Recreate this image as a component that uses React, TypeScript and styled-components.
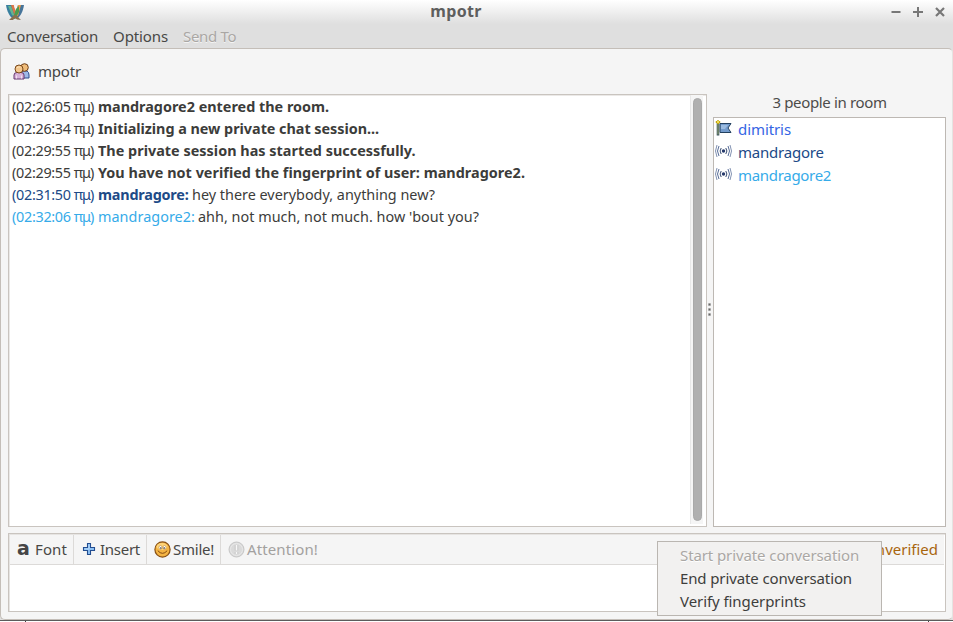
import React from 'react';
import styled, { createGlobalStyle } from 'styled-components';

const GlobalStyle = createGlobalStyle`
  * { box-sizing: border-box; }
  body { margin: 0; background: #fff; font: 15px "Noto Sans", sans-serif; color: #454542; }
  svg { display: block; flex: none; }
`;

const Window = styled.div`
  position: relative;
  width: 953px;
  height: 622px;
  overflow: hidden;
  display: flex;
  flex-direction: column;
  background: #dfdfdf;
`;

const Label = styled.span<{ $ls?: number }>`
  white-space: pre;
  letter-spacing: ${p => p.$ls ?? 0}px;
`;

const TitleBar = styled.header`
  height: 24px;
  flex: none;
  display: grid;
  grid-template-columns: 82px 1fr 82px;
  align-items: center;
  padding: 0 7px 0 5px;
  background: linear-gradient(#ffffff, #dfdfdf);
`;

const Title = styled.h1`
  margin: 0;
  padding: 0 39px 3px 0;
  font-size: 16px;
  line-height: 22px;
  font-weight: 700;
  letter-spacing: 0.3px;
  text-align: center;
  color: #5e5e5e;
`;

const WindowButtons = styled.div`
  display: flex;
  justify-content: flex-end;
  gap: 10px;
  padding-bottom: 2px;
`;

const MenuBar = styled.nav`
  height: 24px;
  flex: none;
  display: flex;
  align-items: flex-start;
  gap: 15px;
  padding-left: 7px;
`;

const MenuEntry = styled.div<{ $disabled?: boolean }>`
  line-height: 24px;
  color: ${p => (p.$disabled ? '#aaa7a4' : '#484846')};
  text-shadow: ${p => (p.$disabled ? '0 1px 0 #f4f4f4' : 'none')};
`;

const Content = styled.main`
  height: 572px;
  flex: none;
  display: flex;
  flex-direction: column;
  padding: 0 6px 0 7px;
  border: 1px solid #c4beb8;
  border-right-color: #e5e3e1;
  border-radius: 5px;
  background: #f5f5f5;
`;

const RoomHeader = styled.div`
  height: 45px;
  flex: none;
  display: flex;
  align-items: center;
  gap: 8px;
  padding: 0 0 1px 5px;
`;

const Panes = styled.div`
  height: 433px;
  flex: none;
  display: flex;
`;

const LogFrame = styled.section`
  width: 699px;
  display: flex;
  justify-content: space-between;
  padding: 0 3px 2px 0;
  border: 1px solid #c9c4bf;
  box-shadow: inset 1px 1px 0 #ebe9e7;
  background: #fff;
`;

const LogLines = styled.div`
  padding: 1px 0 0 3px;
  font-size: 14.4px;
`;

const LogLine = styled.div<{ $color?: string }>`
  height: 22px;
  display: flex;
  line-height: 22px;
  color: ${p => p.$color ?? '#3c3c3a'};
`;

const StampBox = styled.span`
  width: 86px;
  flex: none;
  display: flex;
  gap: 3px;
`;

const Message = styled(Label)`
  color: #3c3c3a;
`;

const Strong = styled(Message)`
  font-weight: 700;
`;

const Author = styled(Label)<{ $bold?: boolean; $gap: number }>`
  font-weight: ${p => (p.$bold ? 700 : 400)};
  width: ${p => p.$gap}px;
`;

const Trough = styled.div`
  width: 13px;
  padding: 3px 2px 3px 2px;
  border-left: 1px solid #e8e8e8;
  background: #f5f5f5;
`;

const Thumb = styled.div`
  width: 9px;
  height: 100%;
  border-radius: 5px;
  background: #b0b0b0;
  border: 1px solid #a9a9a9;
`;

const Grip = styled.div`
  width: 6px;
  display: flex;
  flex-direction: column;
  justify-content: center;
  align-items: flex-start;
  gap: 2px;
  padding: 0 0 3px 1px;
`;

const GripDot = styled.i`
  width: 3px;
  height: 3px;
  border: 1px solid #a2a2a2;
  border-radius: 1px;
  background: #666;
`;

const People = styled.aside`
  width: 233px;
  display: flex;
  flex-direction: column;
`;

const PeopleTitle = styled.div`
  height: 23px;
  flex: none;
  line-height: 16px;
  text-align: center;
  color: #4c4c4a;
`;

const PeopleList = styled.div`
  flex: 1;
  border: 1px solid #bdb8b3;
  background: #fff;
  padding-left: 2px;
`;

const Person = styled.div<{ $color: string }>`
  height: 23px;
  display: flex;
  align-items: flex-start;
  gap: 6px;
  line-height: 23px;
  color: ${p => p.$color};

  svg { margin: 2px 0 0 -1px; }
`;

const Composer = styled.section`
  height: 79px;
  flex: none;
  margin-top: 6px;
  border: 1px solid #c9c4bf;
  box-shadow: inset 1px 1px 0 #e6e4e2;
  background: #fff;
  padding: 1px;
`;

const Toolbar = styled.div`
  height: 30px;
  display: flex;
  align-items: stretch;
  background: #f5f5f5;
  border-bottom: 1px solid #dcdad8;
`;

const Tool = styled.div<{ $w: number; $pad: number; $gap: number; $disabled?: boolean }>`
  width: ${p => p.$w}px;
  display: flex;
  align-items: center;
  gap: ${p => p.$gap}px;
  padding: 0 0 2px ${p => p.$pad}px;
  border-right: 1px solid ${p => (p.$disabled ? 'transparent' : '#dcdad8')};
  color: ${p => (p.$disabled ? '#a3a19f' : '#484846')};

  svg { margin-top: 1px; }
`;

const FontMark = styled.span`
  width: 13px;
  font: 700 19px/26px "DejaVu Sans", sans-serif;
  padding-bottom: 2px;
  color: #454545;
`;

const Status = styled.div`
  margin-left: auto;
  padding-right: 6px;
  line-height: 28px;
  color: #a8650d;
`;

const Popup = styled.div`
  position: absolute;
  left: 657px;
  top: 541px;
  width: 225px;
  height: 75px;
  padding: 3px 0 0 22px;
  border: 1px solid #bab6b1;
  background: #f2f1f0;
`;

const PopupItem = styled.div<{ $disabled?: boolean }>`
  height: 23px;
  line-height: 21px;
  color: ${p => (p.$disabled ? '#aaa7a4' : '#3e3e3c')};
  text-shadow: ${p => (p.$disabled ? '0 1px 0 #fff' : 'none')};
`;

const BottomEdge = styled.div`
  height: 2px;
  flex: none;
  display: flex;
  justify-content: space-between;
  padding: 0 24px 0 25px;
  border-top: 1px solid #5c5c5c;
  background: #fff;
`;

const EdgeTick = styled.i`
  width: 1px;
  height: 1px;
  background: #444;
`;

const AppLogo = () => (
  <svg width="20" height="18" viewBox="0 0 20 18">
    <path d="M1 1H8L12 14 8 14.500C4 12 2 7 1 1Z" fill="#397f9f" />
    <path d="M3 2H6L10 13 7 11Z" fill="#65b590" />
    <path d="M6 1H9L12 12 10 13Z" fill="#dc7648" />
    <path d="M19 1H13L9 13 12 14.500C16 12 18 7 19 1Z" fill="#47759a" />
    <path d="M13 1H16L13 12 10 11Z" fill="#ef9b49" />
    <path d="M11 5 14 2 14 8 10 15 8 14Z" fill="#4d9b4d" />
    <path d="M4 16 9 11H11L16 16 12 15.500 10 14 8 16Z" fill="#8b704f" />
    <path d="M8.500 0H12L10.300 6Z" fill="#f4f4f4" />
  </svg>
);

const GroupIcon = () => (
  <svg width="17" height="17" viewBox="0 0 17 17">
    <path d="M8 15V10Q8 8 11 8H14Q16 9 16 12V15Z" fill="#9eb9e8" stroke="#304d8f" />
    <circle cx="11.500" cy="4.500" r="3.800" fill="#efbc79" stroke="#704018" />
    <path d="M1 16V12Q1 9.500 4 9.500H8Q11 9.500 11 12V16Z" fill="#d8b2d9" stroke="#65366f" />
    <path d="M3.500 12.500v3M8.500 12.500v3" stroke="#f1e3f1" />
    <circle cx="6" cy="6" r="4" fill="#f4c78d" stroke="#784719" />
    <path d="M3.800 4.800Q5 3.500 7 4" stroke="#ffe5bd" fill="none" />
  </svg>
);

const FlagIcon = () => (
  <svg width="17" height="17" viewBox="0 0 17 17">
    <path d="M5 3.500H16L13 8 16 12.500H5Z" fill="#739bcc" stroke="#23405f" />
    <path d="M6 5H13L10 9H6Z" fill="#9bbbe0" />
    <path d="M3 3V15.500" stroke="#37505c" strokeWidth="2.600" />
    <path d="M3 4V14.500" stroke="#9ead76" />
    <path d="M.8 2H5.200M3 .2V4" stroke="#c3a511" strokeWidth="2" />
    <circle cx="3" cy="2" r="1" fill="#fff06b" />
  </svg>
);

const SignalIcon = () => (
  <svg width="17" height="17" viewBox="0 0 17 17" fill="none" stroke="#566c98">
    <circle cx="8.500" cy="8" r="1.700" fill="#263a6c" stroke="none" />
    <path d="M6.200 5Q4 8 6.200 11M10.800 5Q13 8 10.800 11" stroke="#34496f" />
    <path d="M4 3Q1 8 4 13M13 3Q16 8 13 13" />
    <path d="M2 2Q-1 8 2 14M15 2Q18 8 15 14" stroke="#8292b2" />
  </svg>
);

const InsertIcon = () => (
  <svg width="14" height="14" viewBox="0 0 14 14">
    <path d="M5.500 1.500H8.500V5.500H12.500V8.500H8.500V12.500H5.500V8.500H1.500V5.500H5.500Z" fill="#8dc1f4" stroke="#234e91" strokeWidth="1.100" />
    <path d="M7 2.500V7H2.500" stroke="#b9dcfb" fill="none" />
  </svg>
);

const SmileIcon = () => (
  <svg width="17" height="17" viewBox="0 0 17 17">
    <circle cx="8.500" cy="8.500" r="7.600" fill="#f4b443" stroke="#885013" strokeWidth="1.200" />
    <ellipse cx="8" cy="5.500" rx="5.500" ry="3.500" fill="#ffd477" />
    <ellipse cx="6.500" cy="6.500" rx="1.600" ry="2" fill="#fff" stroke="#b8853a" strokeWidth=".6" />
    <ellipse cx="10.500" cy="6.500" rx="1.600" ry="2" fill="#fff" stroke="#b8853a" strokeWidth=".6" />
    <circle cx="6.800" cy="7" r=".8" fill="#333" />
    <circle cx="10.200" cy="7" r=".8" fill="#333" />
    <path d="M3.800 9.700Q8.500 15 13.200 9.700" stroke="#874c12" fill="none" />
  </svg>
);

const AttentionIcon = () => (
  <svg width="17" height="17" viewBox="0 0 17 17">
    <circle cx="8.500" cy="8.500" r="7.500" fill="#dadada" stroke="#c6c6c6" />
    <circle cx="8.500" cy="8.500" r="6" fill="none" stroke="#e8e8e8" />
    <path d="M8.500 4V9.500M8.500 11V13" stroke="#bcbcbc" strokeWidth="3.400" />
    <path d="M8.500 4V9.500M8.500 11V13" stroke="#f7f7f7" strokeWidth="1.800" />
  </svg>
);

const Stamp = ({ time }: { time: string }) => (
  <StampBox>
    <Label $ls={-0.3}>({time}</Label>
    <Label $ls={-1.1}>πμ)</Label>
  </StampBox>
);

const notices: [string, string, number][] = [
  ['02:26:05', 'mandragore2 entered the room.', 0],
  ['02:26:34', 'Initializing a new private chat session...', -0.03],
  ['02:29:55', 'The private session has started successfully.', 0.02],
  ['02:29:55', 'You have not verified the fingerprint of user: mandragore2.', 0.03],
];

export default function App() {
  return (
    <>
      <GlobalStyle />
      <Window>
        <TitleBar>
          <AppLogo />
          <Title>mpotr</Title>
          <WindowButtons>
            <svg width="12" height="12" viewBox="0 0 12 12"><path d="M1.500 6H10.500" stroke="#777" strokeWidth="2" /></svg>
            <svg width="12" height="12" viewBox="0 0 12 12"><path d="M1 6H11M6 1V11" stroke="#777" strokeWidth="2" /></svg>
            <svg width="12" height="12" viewBox="0 0 12 12"><path d="M2 2 10 10M10 2 2 10" stroke="#777" strokeWidth="2.200" /></svg>
          </WindowButtons>
        </TitleBar>
        <MenuBar>
          <MenuEntry><Label $ls={-0.19}>Conversation</Label></MenuEntry>
          <MenuEntry><Label $ls={-0.11}>Options</Label></MenuEntry>
          <MenuEntry $disabled><Label $ls={-0.33}>Send To</Label></MenuEntry>
        </MenuBar>
        <Content>
          <RoomHeader><GroupIcon /><Label $ls={-0.19}>mpotr</Label></RoomHeader>
          <Panes>
            <LogFrame>
              <LogLines>
                {notices.map(([time, text, ls]) => (
                  <LogLine key={text}><Stamp time={time} /><Strong $ls={ls}>{text}</Strong></LogLine>
                ))}
                <LogLine $color="#204a87">
                  <Stamp time="02:31:50" />
                  <Author $bold $gap={94} $ls={-0.2}>mandragore:</Author>
                  <Message>hey there everybody, anything new?</Message>
                </LogLine>
                <LogLine $color="#36abe9">
                  <Stamp time="02:32:06" />
                  <Author $gap={100} $ls={0.04}>mandragore2:</Author>
                  <Message $ls={0.02}>ahh, not much, not much. how 'bout you?</Message>
                </LogLine>
              </LogLines>
              <Trough><Thumb /></Trough>
            </LogFrame>
            <Grip><GripDot /><GripDot /><GripDot /></Grip>
            <People>
              <PeopleTitle><Label $ls={-0.35}>3 people in room</Label></PeopleTitle>
              <PeopleList>
                <Person $color="#3465e4"><FlagIcon /><Label $ls={-0.08}>dimitris</Label></Person>
                <Person $color="#204a87"><SignalIcon /><Label $ls={-0.22}>mandragore</Label></Person>
                <Person $color="#36abe9"><SignalIcon /><Label $ls={-0.31}>mandragore2</Label></Person>
              </PeopleList>
            </People>
          </Panes>
          <Composer>
            <Toolbar>
              <Tool $w={64} $pad={7} $gap={5}><FontMark>a</FontMark><Label $ls={0.1}>Font</Label></Tool>
              <Tool $w={73} $pad={8} $gap={4}><InsertIcon /><Label $ls={-0.27}>Insert</Label></Tool>
              <Tool $w={74} $pad={7} $gap={2}><SmileIcon /><Label $ls={-0.25}>Smile!</Label></Tool>
              <Tool $w={110} $pad={7} $gap={2} $disabled><AttentionIcon /><Label $ls={0.12}>Attention!</Label></Tool>
              <Status>Unverified</Status>
            </Toolbar>
          </Composer>
        </Content>
        <BottomEdge><EdgeTick /><EdgeTick /></BottomEdge>
        <Popup>
          <PopupItem $disabled><Label $ls={-0.1}>Start private conversation</Label></PopupItem>
          <PopupItem><Label $ls={-0.12}>End private conversation</Label></PopupItem>
          <PopupItem><Label $ls={-0.07}>Verify fingerprints</Label></PopupItem>
        </Popup>
      </Window>
    </>
  );
}
